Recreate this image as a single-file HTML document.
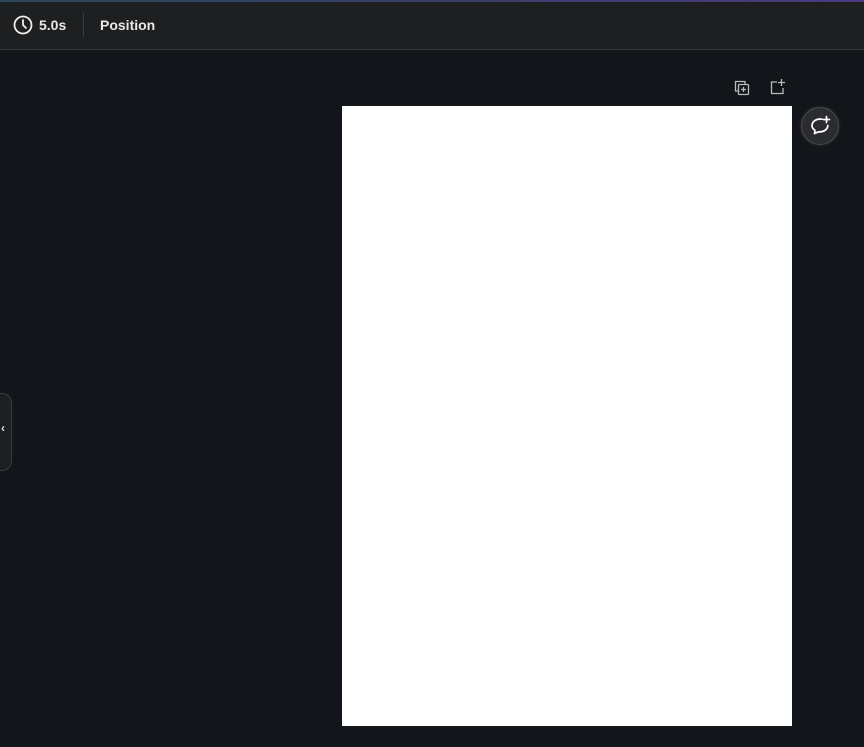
<!DOCTYPE html>
<html><head><style>
body{margin:0;width:864px;height:747px;background:#121519;overflow:hidden;font-family:"Liberation Sans",sans-serif;position:relative}
.top{position:absolute;left:0;top:0;width:864px;height:49px;background:#1e1f21;border-bottom:1px solid #33363a}
.line{position:absolute;left:0;top:0;width:864px;height:2px;background:linear-gradient(90deg,#2a4a5a,#3a3f6a 50%,#4b3a80)}
.t{position:absolute;color:#e9e9ea;font-size:14px;font-weight:bold;top:17px}
.sep{position:absolute;left:83px;top:13px;width:1px;height:24px;background:#3a3c40}
.page{position:absolute;left:342px;top:106px;width:450px;height:620px;background:#fff}
.cbtn{position:absolute;left:801px;top:107px;width:36px;height:36px;border-radius:50%;background:#2a2c2f;border:1px solid #4a4c50;box-shadow:0 0 0 2px #1a1c1f}
.tab{position:absolute;left:-12px;top:393px;width:22px;height:76px;border-radius:10px;background:#1d1f22;border:1px solid #3a3c40}
</style></head><body>
<div class="top"><div class="line"></div>
<svg style="position:absolute;left:13px;top:15px" width="20" height="20" viewBox="0 0 20 20" fill="none" stroke="#eee" stroke-width="1.8"><circle cx="10" cy="10" r="8.5"/><path d="M10 5v5l3 3" stroke-linecap="round"/></svg>
<div class="t" style="left:39px">5.0s</div>
<div class="sep"></div>
<div class="t" style="left:100px">Position</div>
</div>
<svg style="position:absolute;left:733px;top:79px" width="18" height="18" viewBox="0 0 18 18" fill="none" stroke="#bbb" stroke-width="1.3"><path d="M5 12H2.5V2.5H12V5"/><rect x="5.5" y="5.5" width="10" height="10" rx="1"/><path d="M10.5 8v5M8 10.5h5"/></svg>
<svg style="position:absolute;left:769px;top:78px" width="18" height="18" viewBox="0 0 18 18" fill="none" stroke="#bbb" stroke-width="1.3"><path d="M8 4H2.5V15.5H14V10"/><path d="M12.5 1v7M9 4.5h7"/></svg>
<div class="page"></div>
<div class="cbtn"><svg style="position:absolute;left:7px;top:7px" width="22" height="22" viewBox="0 0 22 22" fill="none" stroke="#fff" stroke-width="1.7" stroke-linecap="round" stroke-linejoin="round"><path d="M13 4.2A8 6.5 0 0 0 3 10.5c0 2 1.2 3.7 3 4.8L5.5 18.5 9.5 16.8A8 6.5 0 0 0 18.8 10.5"/><path d="M17.5 1.5v6M14.5 4.5h6"/></svg></div>
<div class="tab"></div>
<div style="position:absolute;left:1px;top:421px;color:#ddd;font-size:12px;font-weight:bold">‹</div>
</body></html>
